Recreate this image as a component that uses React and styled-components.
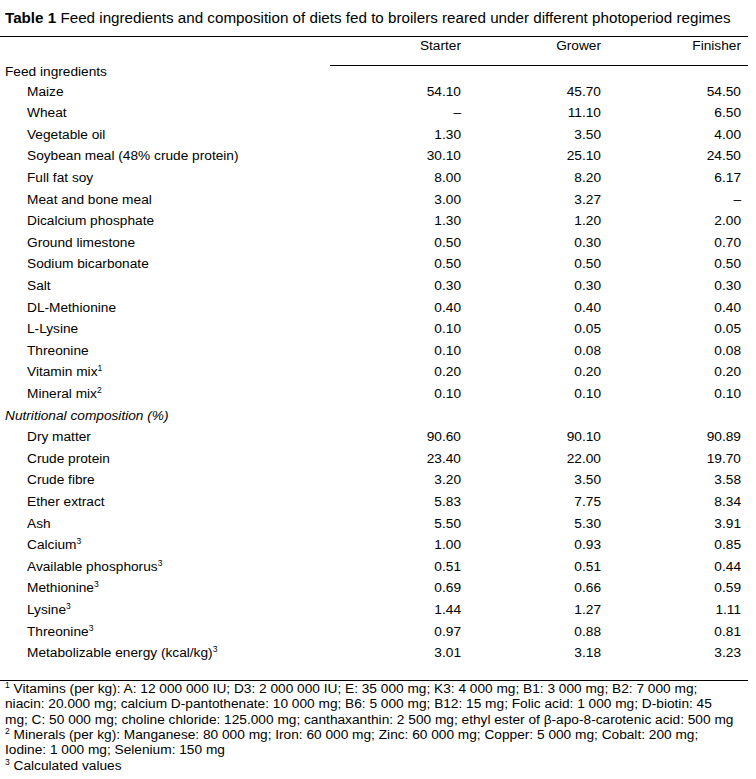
import React from "react";
import styled, { createGlobalStyle } from "styled-components";

const GlobalStyle = createGlobalStyle`
  html, body { margin: 0; padding: 0; background: #fff; }
  body {
    font-family: "Liberation Sans", Arial, sans-serif;
    color: #000;
    font-size: 13.7px;
  }
`;

const Page = styled.div`
  width: 748px;
`;

const Title = styled.div`
  height: 36px;
  line-height: 36px;
  padding-left: 5px;
  font-size: 15.2px;
  white-space: nowrap;
  b { font-weight: bold; }
`;

const Table = styled.div`
  border-top: 1.5px solid #000;
  border-bottom: 1.5px solid #000;
`;

const Row = styled.div`
  display: grid;
  grid-template-columns: 330px 140px 140px 138px;
  height: ${(p) => p.$h}px;
  line-height: ${(p) => p.$lh}px;
`;

const HeadCell = styled.div`
  text-align: right;
  padding-right: ${(p) => (p.$last ? 7 : 9)}px;
  border-bottom: 1.5px solid #000;
  line-height: 18px;
`;

const Label = styled.div`
  padding-left: ${(p) => (p.$indent ? 27 : 5)}px;
  font-style: ${(p) => (p.$italic ? "italic" : "normal")};
  white-space: nowrap;
`;

const Num = styled.div`
  text-align: right;
  padding-right: ${(p) => (p.$last ? 7 : 9)}px;
`;

const Sup = styled.sup`
  font-size: 8.5px;
  line-height: 0;
  vertical-align: 5px;
`;

const Spacer = styled.div`
  height: 16px;
`;

const Notes = styled.div`
  padding-left: 5px;
  line-height: 15.4px;
  white-space: nowrap;
`;

const feed = [
  ["Maize", "54.10", "45.70", "54.50"],
  ["Wheat", "–", "11.10", "6.50"],
  ["Vegetable oil", "1.30", "3.50", "4.00"],
  ["Soybean meal (48% crude protein)", "30.10", "25.10", "24.50"],
  ["Full fat soy", "8.00", "8.20", "6.17"],
  ["Meat and bone meal", "3.00", "3.27", "–"],
  ["Dicalcium phosphate", "1.30", "1.20", "2.00"],
  ["Ground limestone", "0.50", "0.30", "0.70"],
  ["Sodium bicarbonate", "0.50", "0.50", "0.50"],
  ["Salt", "0.30", "0.30", "0.30"],
  ["DL-Methionine", "0.40", "0.40", "0.40"],
  ["L-Lysine", "0.10", "0.05", "0.05"],
  ["Threonine", "0.10", "0.08", "0.08"],
  ["Vitamin mix", "0.20", "0.20", "0.20", "1"],
  ["Mineral mix", "0.10", "0.10", "0.10", "2"],
];

const nutr = [
  ["Dry matter", "90.60", "90.10", "90.89"],
  ["Crude protein", "23.40", "22.00", "19.70"],
  ["Crude fibre", "3.20", "3.50", "3.58"],
  ["Ether extract", "5.83", "7.75", "8.34"],
  ["Ash", "5.50", "5.30", "3.91"],
  ["Calcium", "1.00", "0.93", "0.85", "3"],
  ["Available phosphorus", "0.51", "0.51", "0.44", "3"],
  ["Methionine", "0.69", "0.66", "0.59", "3"],
  ["Lysine", "1.44", "1.27", "1.11", "3"],
  ["Threonine", "0.97", "0.88", "0.81", "3"],
  ["Metabolizable energy (kcal/kg)", "3.01", "3.18", "3.23", "3"],
];

const DataRow = ({ r }) => (
  <Row $h={21.6} $lh={21.6}>
    <Label $indent>
      {r[0]}
      {r[4] && <Sup>{r[4]}</Sup>}
    </Label>
    <Num>{r[1]}</Num>
    <Num>{r[2]}</Num>
    <Num $last>{r[3]}</Num>
  </Row>
);

export default function App() {
  return (
    <Page>
      <GlobalStyle />
      <Title>
        <b>Table 1</b> Feed ingredients and composition of diets fed to broilers reared under different photoperiod regimes
      </Title>
      <Table>
        <Row $h={28.5} $lh={18}>
          <div />
          <HeadCell>Starter</HeadCell>
          <HeadCell>Grower</HeadCell>
          <HeadCell $last>Finisher</HeadCell>
        </Row>
        <Row $h={15.2} $lh={12}>
          <Label>Feed ingredients</Label>
        </Row>
        {feed.map((r) => (
          <DataRow key={"f" + r[0]} r={r} />
        ))}
        <Row $h={21.6} $lh={21.6}>
          <Label $italic>Nutritional composition (%)</Label>
        </Row>
        {nutr.map((r) => (
          <DataRow key={"n" + r[0]} r={r} />
        ))}
        <Spacer />
      </Table>
      <Notes>
        <Sup>1</Sup> Vitamins (per kg): A: 12 000 000 IU; D3: 2 000 000 IU; E: 35 000 mg; K3: 4 000 mg; B1: 3 000 mg; B2: 7 000 mg;
        <br />
        niacin: 20.000 mg; calcium D-pantothenate: 10 000 mg; B6: 5 000 mg; B12: 15 mg; Folic acid: 1 000 mg; D-biotin: 45
        <br />
        mg; C: 50 000 mg; choline chloride: 125.000 mg; canthaxanthin: 2 500 mg; ethyl ester of β-apo-8-carotenic acid: 500 mg
        <br />
        <Sup>2</Sup> Minerals (per kg): Manganese: 80 000 mg; Iron: 60 000 mg; Zinc: 60 000 mg; Copper: 5 000 mg; Cobalt: 200 mg;
        <br />
        Iodine: 1 000 mg; Selenium: 150 mg
        <br />
        <Sup>3</Sup> Calculated values
      </Notes>
    </Page>
  );
}
